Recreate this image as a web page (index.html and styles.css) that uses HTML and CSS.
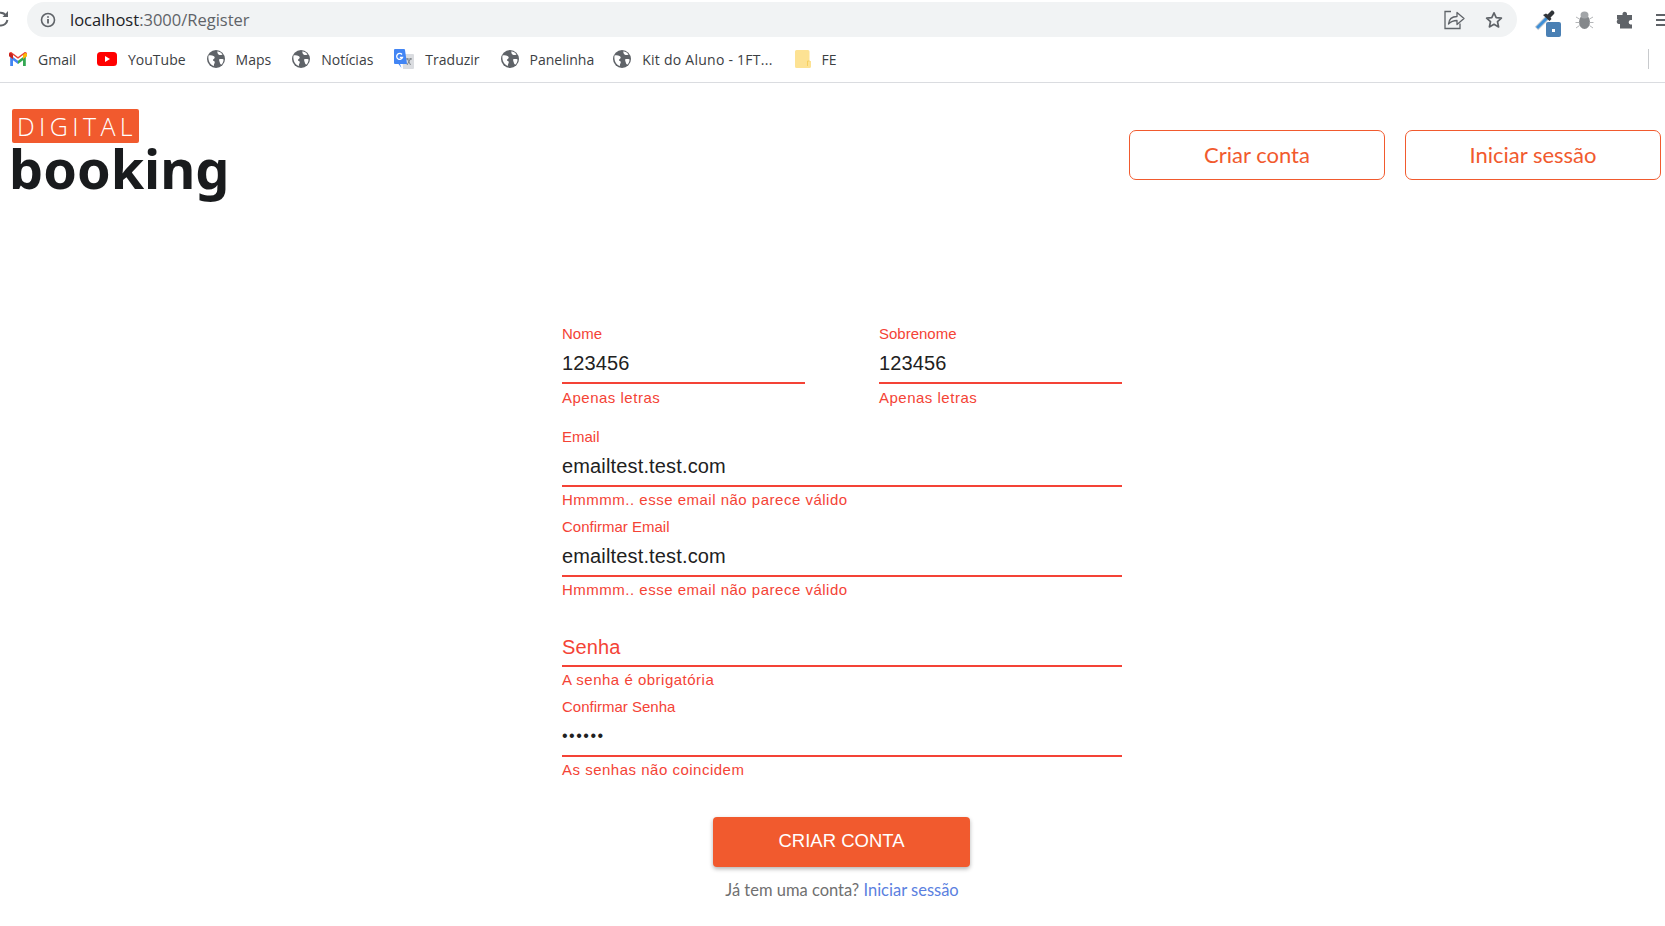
FILE: index.html
```html
<!DOCTYPE html>
<html lang="pt-BR">
<head>
    <meta charset="UTF-8">
    <meta name="viewport" content="width=device-width, initial-scale=1.0">
    <title>Digital Booking - Criar conta</title>
    <link rel="stylesheet" href="styles.css">
</head>
<body>
    <svg class="sprites" width="0" height="0">
        <symbol id="globe" viewBox="0 0 18 18">
            <circle cx="9" cy="9" r="9" fill="#5f6368"/>
            <path d="M1.500 5.500c2-.6 3.500-.3 5.500.8 1 .8 1 2-.2 2.600-1.300.6-1 1.800.2 2.200.9.300 1 1.500.4 2.400-.4.6-.6 1.500-.5 2.500C3.500 15 .7 11 1.500 5.500zM10.500 1.300c1.800.3 3.800 1.500 5 3.200-1.200.7-2.600.8-3.700.2-1-.5-1.800-1.900-1.300-3.400zM12 9.500c1.200-.6 3-.6 4.600-.1-.1 2-.9 3.900-2.400 5.400-.8-.6-1.300-1.500-1.500-2.500-.2-1-.6-1.800-.7-2.800z" fill="#fff"/>
        </symbol>
    </svg>

    <div class="browser">
        <div class="toolbar">
            <svg class="reload" width="10" height="20" viewBox="0 0 10 20"><path d="M0 3.800a6.500 6.500 0 0 1 6 3M7.400 11a6.500 6.500 0 0 1-7.400 5.400" fill="none" stroke="#5f6368" stroke-width="2"/><path d="M8 2v6H2.500z" fill="#5f6368"/></svg>
            <div class="omnibox">
                <svg width="16" height="16" viewBox="0 0 16 16"><circle cx="8" cy="8" r="6.500" fill="none" stroke="#5f6368" stroke-width="1.600"/><path d="M8 7v4.500M8 4.300v1.500" stroke="#5f6368" stroke-width="1.800"/></svg>
                <span class="url"><span class="url-host">localhost</span>:3000/Register</span>
                <svg class="omni-share" width="21" height="20" viewBox="0 0 21 20"><path d="M7 1.500H1v17h15v-5" fill="none" stroke="#5f6368" stroke-width="1.300"/><path d="M4.500 14c.5-5 4-7.500 8.500-7.500V2.500l7 6-7 6v-4c-3.500 0-6 1-8.500 3.500z" fill="none" stroke="#5f6368" stroke-width="1.300" stroke-linejoin="round"/></svg>
                <svg class="omni-star" width="18" height="18" viewBox="0 0 18 18"><path d="M9 1.800l2.200 4.800 5.200.6-3.900 3.500 1.100 5.200L9 13.300l-4.600 2.600 1.100-5.200-3.900-3.500 5.200-.6z" fill="none" stroke="#5f6368" stroke-width="1.700" stroke-linejoin="round"/></svg>
            </div>
            <div class="extensions">
                <span class="ext-picker">
                    <svg width="22" height="22" viewBox="0 0 22 22"><path d="M2.500 19.500L13 9" stroke="#c9ced3" stroke-width="5"/><path d="M3 19L13 9" stroke="#3f8fd6" stroke-width="3"/><path d="M12 4.500l1.500 1L17 2c1.500-1.500 4.500 1.500 3 3l-3.500 3.500 1 1.500-2 2-6.500-6z" fill="#303438"/></svg>
                    <span class="ext-badge"></span>
                </span>
                <svg width="19" height="20" viewBox="0 0 19 20"><ellipse cx="9.500" cy="12" rx="5.500" ry="7" fill="#85888b"/><ellipse cx="9.500" cy="5" rx="4" ry="3.500" fill="#a2a5a8"/><path d="M1 7l3.500 2M.5 12.500h4M1 18l3.500-2.500M18 7l-3.500 2M18.500 12.500h-4M18 18l-3.500-2.500" stroke="#b4b6b8" stroke-width="1"/></svg>
                <svg width="18" height="18" viewBox="0 0 18 18"><path d="M6.500 2.500a2.300 2.300 0 0 1 4.500 0V4h5v5h-1.500a2.300 2.300 0 0 0 0 4.500H16v4H4v-4.500H2.500a2.300 2.300 0 0 1 0-4.500H1V4h5.500z" fill="#5f6368"/></svg>
                <span class="ext-menu"></span>
            </div>
        </div>
        <div class="bookmarks">
            <a class="bookmark">
                <svg width="18" height="14" viewBox="0 0 18 14"><path d="M1.200 14V3l7.800 5.800V12L4 8.300V14z" fill="#4285f4"/><path d="M16.800 14V3L9 8.800V12l5-3.700V14z" fill="#34a853"/><path d="M0 1.800C0 .3 1.700-.5 2.900.4L9 5l6.100-4.600c1.200-.9 2.900-.1 2.900 1.400V4l-4 3V3L9 6.800 4 3v4L0 4z" fill="#ea4335"/><path d="M14 3v4l4-3V2c-1-2-2.500-1-4 1z" fill="#fbbc04"/><path d="M0 2v2l4 3V3C2.500 1 1 0 0 2z" fill="#c5221f"/></svg>
                Gmail
            </a>
            <a class="bookmark">
                <svg width="20" height="14" viewBox="0 0 20 14"><rect width="20" height="14" rx="3.500" fill="#f00"/><path d="M8 4l5 3-5 3z" fill="#fff"/></svg>
                YouTube
            </a>
            <a class="bookmark"><svg width="18" height="18"><use href="#globe"/></svg>Maps</a>
            <a class="bookmark"><svg width="18" height="18"><use href="#globe"/></svg>Notícias</a>
            <a class="bookmark">
                <svg width="20" height="20" viewBox="0 0 20 20"><path d="M8 5h11a1 1 0 0 1 1 1v13a1 1 0 0 1-1 1H9z" fill="#dadce0"/><path d="M13 9l3.500 7M17 9l-4 7M12 10h6" stroke="#80868b" stroke-width="1" fill="none"/><path d="M1 0h9a1 1 0 0 1 1 1l2 14H6l1.500 4L4.500 15H1a1 1 0 0 1-1-1V1a1 1 0 0 1 1-1z" fill="#4285f4"/><path d="M8 5.500a3 3 0 1 0 .5 3H5.800" fill="none" stroke="#fff" stroke-width="1.300"/></svg>
                Traduzir
            </a>
            <a class="bookmark"><svg width="18" height="18"><use href="#globe"/></svg>Panelinha</a>
            <a class="bookmark bookmark-long"><svg width="18" height="18"><use href="#globe"/></svg>Kit do Aluno - 1FT...</a>
            <a class="bookmark">
                <svg width="16" height="18" viewBox="0 0 16 18"><path d="M1.500 0H13a1.500 1.500 0 0 1 1.500 1.500V11H16v5.500a1.500 1.500 0 0 1-1.500 1.500h-13A1.500 1.500 0 0 1 0 16.500v-15A1.500 1.500 0 0 1 1.500 0z" fill="#fde293"/><path d="M14.500 11h-2v5" fill="none" stroke="#f6cf5f" stroke-width="1"/></svg>
                FE
            </a>
            <span class="bookmarks-sep"></span>
        </div>
    </div>

    <header class="site-header">
        <div class="logo">
            <span class="logo-badge">DIGITAL</span>
            <span class="logo-name">booking</span>
        </div>
        <nav class="header-actions">
            <a class="btn-outline">Criar conta</a>
            <a class="btn-outline">Iniciar sessão</a>
        </nav>
    </header>

    <main class="register">
        <form class="register-form">
            <div class="field-row">
                <div class="field">
                    <label class="field-label">Nome</label>
                    <div class="field-input">123456</div>
                    <p class="field-error">Apenas letras</p>
                </div>
                <div class="field">
                    <label class="field-label">Sobrenome</label>
                    <div class="field-input">123456</div>
                    <p class="field-error">Apenas letras</p>
                </div>
            </div>
            <div class="field">
                <label class="field-label">Email</label>
                <div class="field-input">emailtest.test.com</div>
                <p class="field-error">Hmmmm.. esse email não parece válido</p>
            </div>
            <div class="field">
                <label class="field-label">Confirmar Email</label>
                <div class="field-input">emailtest.test.com</div>
                <p class="field-error">Hmmmm.. esse email não parece válido</p>
            </div>
            <div class="field">
                <label class="field-label"></label>
                <div class="field-input field-placeholder">Senha</div>
                <p class="field-error">A senha é obrigatória</p>
            </div>
            <div class="field">
                <label class="field-label">Confirmar Senha</label>
                <div class="field-input field-password">••••••</div>
                <p class="field-error">As senhas não coincidem</p>
            </div>
            <button type="button" class="btn-submit">CRIAR CONTA</button>
            <p class="login-hint">Já tem uma conta? <a>Iniciar sessão</a></p>
        </form>
    </main>
</body>
</html>
```

FILE: styles.css
```css
* {
    box-sizing: border-box;
}
html, body {
    margin: 0;
    height: 926px;
    overflow: hidden;
    background-color: #fff;
}
.sprites {
    display: block;
}

/* browser chrome */
.browser {
    height: 83px;
    border-bottom: 1px solid #dadce0;
    font-family: "Open Sans", sans-serif;
    color: #3c4043;
    overflow: hidden;
}
.toolbar {
    height: 38px;
    padding-top: 2px;
    display: flex;
    align-items: flex-start;
}
.reload {
    flex: none;
    width: 10px;
    margin-top: 7px;
}
.omnibox {
    flex: none;
    width: 1490px;
    height: 35px;
    margin-left: 17px;
    padding: 0 14px 0 13px;
    border-radius: 18px;
    background-color: #f1f3f4;
    display: flex;
    align-items: center;
}
.url {
    margin-left: 14px;
    font-size: 16.500px;
    color: #5f6368;
    flex: 1;
}
.url-host {
    color: #202124;
}
.omni-star {
    margin-left: 20px;
}
.extensions {
    display: flex;
    align-items: center;
    gap: 22px;
    height: 35px;
    margin-left: 17px;
}
.ext-picker {
    position: relative;
    display: block;
    width: 22px;
    height: 22px;
    margin-right: -3px;
}
.ext-badge {
    position: absolute;
    left: 12px;
    top: 13px;
    width: 15px;
    height: 15px;
    border-radius: 2px;
    background-color: #4a80b4;
}
.ext-badge::after {
    content: "";
    position: absolute;
    left: 6px;
    top: 7px;
    width: 3px;
    height: 3px;
    background-color: #fff;
}
.ext-menu {
    width: 12px;
    height: 12px;
    flex: none;
    border-top: 2px solid #5f6368;
    border-bottom: 2px solid #5f6368;
    background: linear-gradient(#5f6368, #5f6368) center / 100% 2px no-repeat;
}
.bookmarks {
    height: 42px;
    padding-left: 9px;
    display: flex;
    align-items: center;
    gap: 21px;
    font-size: 14px;
}
.bookmark {
    display: flex;
    align-items: center;
    gap: 11px;
}
.bookmark svg {
    flex: none;
}
.bookmark-long {
    margin: 0 1px 0 -2px;
    letter-spacing: 0.250px;
}
.bookmarks-sep {
    width: 1px;
    height: 20px;
    margin-left: auto;
    margin-right: 16px;
    background-color: #c8cacd;
}

/* site header */
.site-header {
    display: flex;
    justify-content: space-between;
    padding: 26px 4px 0 12px;
    height: 242px;
}
.logo {
    display: flex;
    flex-direction: column;
    align-items: flex-start;
}
.logo-badge {
    width: 127px;
    height: 34px;
    border-radius: 2px;
    background-color: #f15a2e;
    color: #fff;
    font-family: "Open Sans", sans-serif;
    font-weight: 300;
    font-size: 25px;
    line-height: 34px;
    letter-spacing: 4.400px;
    padding-left: 5px;
}
.logo-name {
    margin-left: -3px;
    font-family: "Noto Sans", sans-serif;
    font-weight: 700;
    font-size: 54px;
    line-height: 50px;
    color: #191b1d;
}
.header-actions {
    display: flex;
    gap: 20px;
    padding-top: 21px;
}
.btn-outline {
    width: 256px;
    height: 50px;
    border: 1px solid #f15a2e;
    border-radius: 7px;
    color: #f15a2e;
    font-family: "Lato", sans-serif;
    font-size: 22px;
    line-height: 48px;
    text-align: center;
}

/* form */
.register {
    display: flex;
    justify-content: center;
    padding-left: 19px;
}
.register-form {
    width: 560px;
    font-family: "Liberation Sans", Arial, sans-serif;
}
.field-row {
    display: flex;
    justify-content: space-between;
    margin-bottom: 13px;
}
.field-row .field {
    width: 243px;
}
.field {
    height: 90px;
}
.field-label {
    display: block;
    height: 17px;
    color: #f44336;
    font-size: 15px;
    line-height: 17px;
}
.field-input {
    height: 42px;
    border-bottom: 2px solid #f44336;
    color: #212121;
    font-size: 20px;
    line-height: 43px;
    letter-spacing: 0.150px;
}
.field-placeholder {
    color: #f44336;
    line-height: 45px;
}
.field-password {
    font-size: 16px;
    line-height: 41px;
    letter-spacing: 1.500px;
}
.field-error {
    margin: 4px 0 0;
    color: #f44336;
    font-size: 15px;
    line-height: 17px;
    letter-spacing: 0.500px;
}
.field-row .field-error {
    margin-top: 5px;
}
.btn-submit {
    display: block;
    width: 257px;
    height: 50px;
    margin: 29px 0 0 151px;
    padding-bottom: 3px;
    border: none;
    border-radius: 4px;
    background-color: #f15a2e;
    color: #fff;
    font-family: "Liberation Sans", Arial, sans-serif;
    font-size: 18.500px;
    box-shadow: 0 2px 4px rgba(0,0,0,0.3);
}
.login-hint {
    margin: 14px 0 0;
    text-align: center;
    color: #707070;
    font-family: "Lato", sans-serif;
    font-size: 16.500px;
    line-height: 18px;
}
.login-hint a {
    color: #5b7fe0;
}
```
